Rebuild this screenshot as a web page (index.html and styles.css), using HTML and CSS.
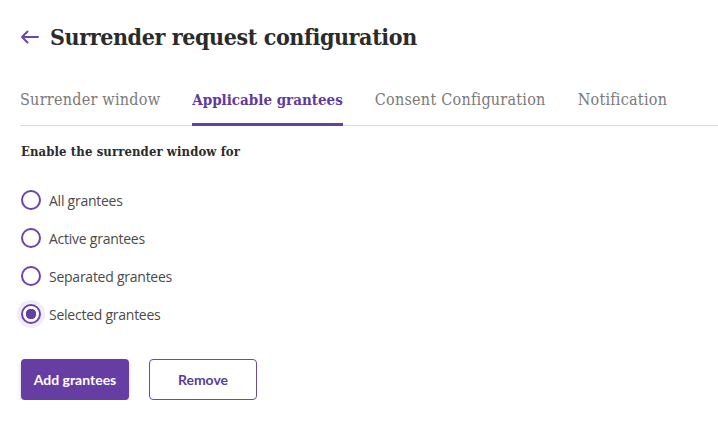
FILE: index.html
```html
<!DOCTYPE html>
<html lang="en">
<head>
<meta charset="utf-8">
<title>Surrender request configuration</title>
<link rel="stylesheet" href="styles.css">
</head>
<body>
<div class="page">
  <header class="header">
    <button class="back" aria-label="Back">
      <svg width="19" height="14" viewBox="0 0 19 14" fill="none" stroke="#6b46ad" stroke-width="2" stroke-linecap="round" stroke-linejoin="round"><path d="M18 7H2M7.5 1.5L2 7l5.5 5.5"/></svg>
    </button>
    <h1 class="title">Surrender request configuration</h1>
  </header>
  <nav class="tabs">
    <a class="tab">Surrender window</a>
    <a class="tab active">Applicable grantees</a>
    <a class="tab">Consent Configuration</a>
    <a class="tab">Notification</a>
  </nav>
  <section class="content">
    <h2 class="label">Enable the surrender window for</h2>
    <div class="radios">
      <label class="radio"><span class="dot"></span><span class="rtext">All grantees</span></label>
      <label class="radio"><span class="dot"></span><span class="rtext">Active grantees</span></label>
      <label class="radio"><span class="dot"></span><span class="rtext">Separated grantees</span></label>
      <label class="radio checked"><span class="dot"></span><span class="rtext">Selected grantees</span></label>
    </div>
    <div class="actions">
      <button class="btn primary">Add grantees</button>
      <button class="btn outline">Remove</button>
    </div>
  </section>
</div>
</body>
</html>
```
FILE: styles.css
```css
* { box-sizing: border-box; }
html, body { margin: 0; padding: 0; background: #fff; }
body { font-family: "DejaVu Serif Condensed", "DejaVu Serif", serif; }

.page { padding: 22px 0 0 20px; }

.header { display: flex; align-items: center; gap: 11px; height: 30px; }
.back { border: 0; background: none; padding: 0; width: 19px; height: 14px; display: flex; cursor: pointer; }
.title { margin: 0; font-size: 23px; font-weight: 700; color: #2b2b2b; line-height: 30px; letter-spacing: -0.4px; }

.tabs { display: flex; gap: 32px; margin-top: 38px; border-bottom: 1px solid #d9d9d9; }
.tab { font-size: 16px; color: #7a7a7a; line-height: 20px; padding-bottom: 13px; border-bottom: 3px solid transparent; margin-bottom: -1px; letter-spacing: 0.25px; }
.tab.active { color: #5f3b9e; font-weight: 700; font-size: 15px; letter-spacing: 0; border-bottom-color: #6440a6; }

.content { padding-left: 1px; }
.label { margin: 17px 0 0; font-size: 13px; font-weight: 700; color: #2b2b2b; line-height: 18px; letter-spacing: 0.1px; }

.radios { display: flex; flex-direction: column; gap: 18px; margin-top: 29px; }
.radio { display: flex; align-items: center; gap: 8px; height: 20px; }
.dot { width: 20px; height: 20px; border-radius: 50%; border: 2px solid #6a44ad; background: #fff; flex: none; }
.radio.checked .dot { background: radial-gradient(circle, #6440a6 0 5px, #fff 5.5px); box-shadow: 0 0 0 4px #f1ecf8; }
.rtext { font-family: "Open Sans", sans-serif; font-size: 14px; color: #4a4a4a; letter-spacing: -0.25px; }

.actions { display: flex; gap: 20px; margin-top: 35px; }
.btn { width: 108px; height: 41px; border-radius: 4px; font-family: Lato, sans-serif; font-weight: 700; font-size: 14px; cursor: pointer; }
.btn.primary { background: #663ea3; color: #fff; border: 0; box-shadow: 0 2px 4px rgba(0,0,0,0.18); }
.btn.outline { background: #fff; color: #5a3d99; border: 1px solid #6b4aa8; }
```
